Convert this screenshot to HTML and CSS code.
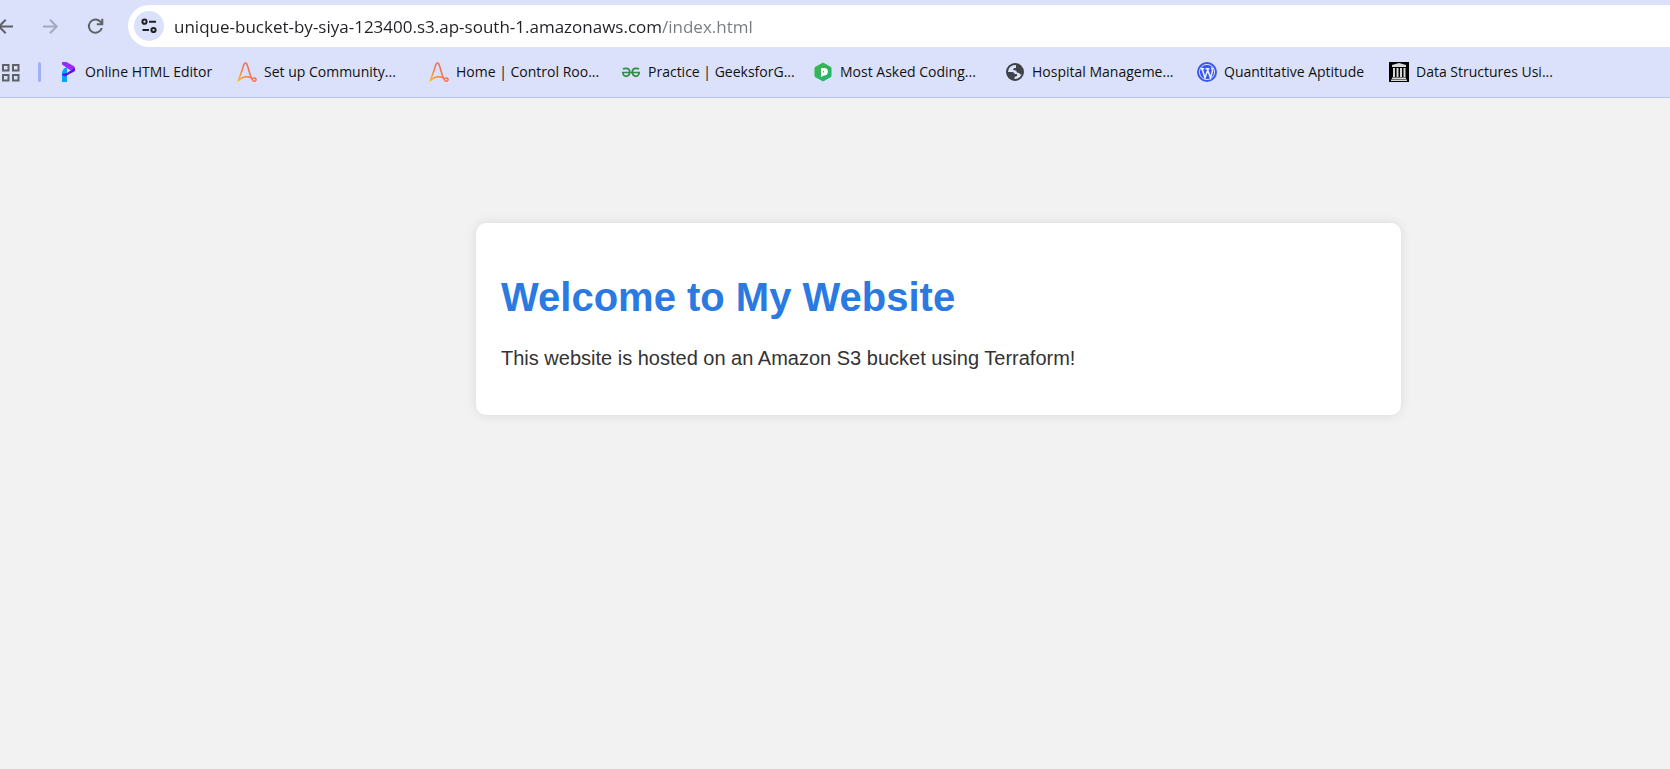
FILE: index.html
```html
<!DOCTYPE html>
<html lang="en">
<head>
<meta charset="utf-8">
<title>Welcome to My Website</title>
<link rel="stylesheet" href="styles.css">
</head>
<body>
<svg class="defs" aria-hidden="true">
  <defs>
    <linearGradient id="warm" gradientUnits="userSpaceOnUse" x1="1" y1="19" x2="12" y2="10">
      <stop offset="0" stop-color="#ffc41a"/>
      <stop offset="0.6" stop-color="#fb8044"/>
      <stop offset="1" stop-color="#f56f4c"/>
    </linearGradient>
    <linearGradient id="green" x1="0" y1="0" x2="1" y2="1">
      <stop offset="0" stop-color="#3fb549"/>
      <stop offset="1" stop-color="#1fb574"/>
    </linearGradient>
    <symbol id="ribbon-a" viewBox="0 0 20 20">
      <path d="M1 19C3.500 13.500 5.500 6.500 7 2.300C7.700 .500 9.300 .500 10 2.300C11.500 6.500 12.600 12 14.300 15.800C15.200 18 16.300 19.500 17.700 19.200C19.600 18.700 19.500 16 17.600 15.900C16.300 15.900 15.800 16.900 14.300 16C10.500 14.200 5.500 14.500 1 19Z" fill="none" stroke="url(#warm)" stroke-width="1.500" stroke-linejoin="round"/>
    </symbol>
  </defs>
</svg>
<header class="browser">
  <div class="toolbar">
    <nav class="nav-buttons" aria-label="History">
      <button class="icon-button" type="button" aria-label="Back"><svg width="20" height="20" viewBox="0 0 20 20"><path d="M18 10.500H4M10.700 3.800L4 10.500l6.700 6.700"/></svg></button>
      <button class="icon-button faded" type="button" aria-label="Forward"><svg width="20" height="20" viewBox="0 0 20 20"><path d="M3 10.500H16.500M10 3.800l6.700 6.700-6.700 6.700"/></svg></button>
      <button class="icon-button" type="button" aria-label="Reload"><svg width="20" height="20" viewBox="0 0 20 20"><path d="M16.800 12A6.600 6.600 0 1 1 15.200 5.500L17.300 7.600M17.300 2.700V8.200H11.800"/></svg></button>
    </nav>
    <div class="address">
      <button class="site-info" type="button" aria-label="View site information"><svg width="18" height="18" viewBox="0 0 18 18"><circle cx="4.500" cy="4.700" r="2.100"/><path d="M9 4.700h7M2.500 13h6.500"/><circle cx="13.500" cy="13" r="2.100"/></svg></button>
      <input class="url" type="text" aria-label="Address" value="unique-bucket-by-siya-123400.s3.ap-south-1.amazonaws.com/index.html" spellcheck="false">
    </div>
  </div>
  <nav class="bookmarks" aria-label="Bookmarks">
    <button class="apps" type="button" aria-label="Apps"><svg width="20" height="20" viewBox="0 0 20 20"><path d="M3 3h5.500v5.500H3zM13 3h5.500v5.500H13zM3 13h5.500v5.500H3zM13 13h5.500v5.500H13z"/></svg></button>
    <span class="separator"></span>
    <a class="bookmark first" href="#"><svg viewBox="0 0 20 20"><path fill="#0aa2ff" d="M4 10l2-3.500L9 5v15H4z"/><path fill="#9a2bff" d="M4 0h4.500l8 4.500v3L12 8 4 2.500z"/><path fill="#5a12dc" d="M17 5.500v3.500L7 14.500 4 13v-1l5-1z"/></svg><span>Online HTML Editor</span></a>
    <a class="bookmark" href="#"><svg><use href="#ribbon-a"/></svg><span>Set up Community...</span></a>
    <a class="bookmark" href="#"><svg><use href="#ribbon-a"/></svg><span>Home | Control Roo...</span></a>
    <a class="bookmark" href="#"><svg viewBox="0 0 20 20"><path d="M2 7Q3 6.300 5 6.300Q8.700 6.300 8.700 10T5.200 14.300Q2.300 14.300 1.800 10.500M18 7Q17 6.300 15 6.300Q11.300 6.300 11.300 10T14.800 14.300Q17.700 14.300 18.200 10.500M1 10.500H19" fill="none" stroke="#2f8d46" stroke-width="1.700"/></svg><span>Practice | GeeksforG...</span></a>
    <a class="bookmark" href="#"><svg viewBox="0 0 20 20"><path fill="url(#green)" stroke="url(#green)" stroke-linejoin="round" d="M10 1l8 4.500v9L10 19l-8-4.500v-9z"/><path fill="#fff" d="M8 6h3.200a3.200 3.200 0 0 1 0 7.400H11L8 15z"/><path fill="#2db55d" d="M10 9h1v1.500h-1z"/></svg><span>Most Asked Coding...</span></a>
    <a class="bookmark" href="#"><svg viewBox="0 0 20 20"><circle cx="10" cy="10" r="8" fill="#dbe1fa" stroke="#404347" stroke-width="2"/><path fill="#404347" d="M11 2c4 0 7 4 7 8.500l-2 2.500-2-2-2-.500-1-2-3-.500 1-2h2zM2 10h5c2 0 2.500 1 2.500 2h2.500v2l-2.500 1v3C5 18 2 14 2 10z"/></svg><span>Hospital Manageme...</span></a>
    <a class="bookmark" href="#"><svg viewBox="0 0 20 20"><circle cx="10" cy="10" r="10" fill="#3858e9"/><circle cx="10" cy="10" r="7.600" fill="none" stroke="#dbe1fa" stroke-width="1"/><path d="M3.500 6.800h3.700M8.500 6.800h4M5 6.800l3 9 2.500-7M10.300 6.800l3.200 9L15.600 9Q15.500 7 14.500 5.500" fill="none" stroke="#eef1ff" stroke-width="1.500"/></svg><span>Quantitative Aptitude</span></a>
    <a class="bookmark" href="#"><svg viewBox="0 0 20 20"><path d="M0 0h20v20H0z"/><path fill="#d8d8d8" d="M10 1l7 2v2H3V3zM4 6h2v9H4zM7.500 6h2v9h-2zM11 6h2v9h-2zM14.500 6h2v9h-2zM3 15.500h14V17H3zM2 17.500h16V19H2z"/></svg><span>Data Structures Usi...</span></a>
  </nav>
</header>
<main class="page">
  <section class="card">
    <h1>Welcome to My Website</h1>
    <p>This website is hosted on an Amazon S3 bucket using Terraform!</p>
  </section>
</main>
</body>
</html>
```
FILE: styles.css
```css
* { box-sizing: border-box; }
body {
  margin: 0;
  min-height: 100vh;
  background: #f2f2f2;
  font-family: "Liberation Sans", Arial, sans-serif;
}
.defs { position: absolute; width: 0; height: 0; }
button { padding: 0; border: 0; background: none; }
svg { display: block; flex: none; }
.browser {
  background: #dbe1fa;
  border-bottom: 1px solid #b9c3dc;
  font-family: "Open Sans", "Noto Sans", sans-serif;
}
.toolbar { display: flex; align-items: center; padding-top: 5px; }
.nav-buttons { display: flex; gap: 25px; width: 128px; margin-left: -5px; margin-right: 5px; }
.nav-buttons svg { fill: none; stroke: #5f6368; stroke-width: 2; }
.icon-button.faded svg { stroke: #a5a9bf; }
.address {
  flex: 1;
  display: flex;
  align-items: center;
  gap: 10px;
  height: 42px;
  padding-left: 6px;
  background: #fff;
  border-radius: 21px 0 0 21px;
}
.site-info {
  display: grid;
  place-items: center;
  width: 30px;
  height: 30px;
  border-radius: 50%;
  background: #dbe1fa;
}
.site-info svg { fill: none; stroke: #202124; stroke-width: 2; }
.url {
  flex: 1;
  min-width: 0;
  padding: 2px 0 0;
  border: 0;
  outline: 0;
  font: 17px/24px "Open Sans", "Noto Sans", sans-serif;
  color: transparent;
  background: linear-gradient(90deg, #202124 487px, #777a7e 487px);
  -webkit-background-clip: text;
  background-clip: text;
}
.bookmarks { display: flex; align-items: center; height: 50px; overflow: hidden; }
.apps svg { fill: none; stroke: #5f6368; stroke-width: 2; }
.separator { width: 3px; height: 20px; margin: 0 17px 0 18px; border-radius: 2px; background: #a0b0f2; }
.bookmark {
  flex: none;
  display: flex;
  align-items: center;
  gap: 7px;
  width: 192px;
  color: #111;
  font-size: 14px;
  line-height: 20px;
  text-decoration: none;
  white-space: nowrap;
}
.bookmark.first { width: 179px; }
.bookmark svg { width: 20px; height: 20px; }
.page { padding: 125px 0 40px 207px; }
.card {
  max-width: 925px;
  margin: 0 auto;
  padding: 25px;
  border-radius: 10px;
  background: #fff;
  box-shadow: 0 0 12px rgba(0, 0, 0, 0.1);
  color: #333;
}
.card h1 { margin: 27px 0; font-size: 40px; line-height: 45px; color: #2a7ae2; }
.card p { margin: 0 0 20px; font-size: 20px; line-height: 23px; }
```
